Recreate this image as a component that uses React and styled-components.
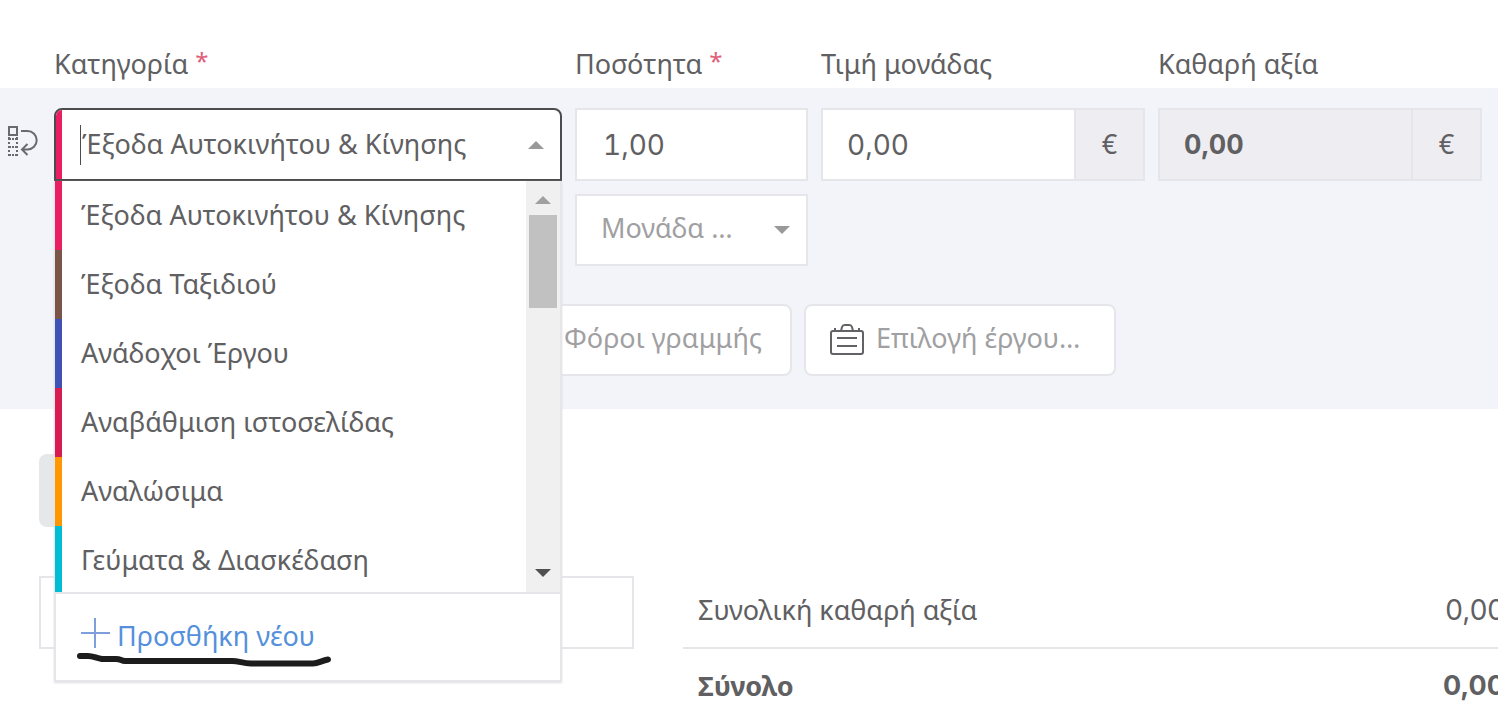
import React, { useState } from 'react';
import styled, { createGlobalStyle } from 'styled-components';

const GlobalStyle = createGlobalStyle`
    * {
        box-sizing: border-box;
    }
    body {
        margin: 0;
        background: #ffffff;
        color: #606062;
        font-family: "Noto Sans", "Open Sans", sans-serif;
        font-size: 27px;
        line-height: 40px;
    }
    input, button, select {
        font: inherit;
        color: inherit;
        margin: 0;
    }
`

const Page = styled.main`
    overflow: hidden;
`

const Columns = styled.div`
    display: grid;
    grid-template-columns: 41px 508fr 233fr 324fr 324fr;
    column-gap: 13px;
    row-gap: 13px;
    padding-right: 16px;
`

const Labels = styled(Columns)`
    padding-top: 44px;
    padding-bottom: 4px;
`

const Label = styled.label`
    grid-column: ${props => props.$col};
    white-space: nowrap;
`

const Star = styled.span`
    color: #e0607a;
    font-size: 24px;
    line-height: 24px;
    vertical-align: 4px;
`

const Line = styled(Columns)`
    background: #f3f4f9;
    padding-top: 20px;
    padding-bottom: 33px;
`

const MoveBtn = styled.button`
    display: flex;
    align-items: center;
    height: 66px;
    padding: 0 0 0 6px;
    border: 0;
    background: none;
`

const Category = styled.div`
    position: relative;
    height: 73px;
`

const Combo = styled.div`
    display: flex;
    align-items: center;
    height: 73px;
    padding-right: 16px;
    background: #ffffff;
    border: 2px solid #4c4c4e;
    border-radius: 8px 8px 0 0;
    overflow: hidden;
    &::before {
        content: "";
        width: 6px;
        height: 100%;
        background: #e91e63;
    }
`

const Caret = styled.span`
    width: 1px;
    height: 40px;
    margin-left: 18px;
    margin-right: 1px;
    background: #4c4c4e;
`

const ComboInput = styled.input`
    flex: 1;
    min-width: 0;
    height: 100%;
    padding: 0 0 2px;
    border: 0;
    outline: 0;
    background: none;
`

const Arrow = styled.span`
    border: 8px solid transparent;
    border-top: ${props => props.$up ? "0" : `8px solid ${props.$color}`};
    border-bottom: ${props => props.$up ? `8px solid ${props.$color}` : "0"};
`

const Menu = styled.div`
    position: absolute;
    z-index: 2;
    top: 73px;
    left: 0;
    right: 0;
    background: #ffffff;
    border: 2px solid #e6e6ea;
    border-top: 0;
    box-shadow: 0 1px 2px #dddddd;
`

const Scroller = styled.div`
    display: flex;
    height: 411px;
`

const Options = styled.ul`
    flex: 1;
    margin: 0 0 0 -1px;
    padding: 0;
    list-style: none;
    overflow: hidden;
`

const Option = styled.li`
    height: 69px;
    padding-left: 19px;
    border-left: 7px solid ${props => props.$color};
    line-height: 67px;
    white-space: nowrap;
    cursor: pointer;
`

const ScrollBar = styled.div`
    display: flex;
    flex-direction: column;
    align-items: center;
    width: 34px;
    padding: 15px 0;
    background: #f0f0f0;
`

const Thumb = styled.div`
    width: 28px;
    height: 93px;
    margin-top: 11px;
    margin-bottom: auto;
    background: #c1c1c1;
`

const MenuFooter = styled.div`
    position: relative;
    height: 88px;
    border-top: 2px solid #e6e6ea;
`

const AddBtn = styled.button`
    display: flex;
    align-items: center;
    gap: 7px;
    height: 84px;
    padding: 0 25px;
    border: 0;
    background: none;
    color: #5590dc;
    cursor: pointer;
`

const Marker = styled.svg`
    position: absolute;
    left: 20px;
    top: 58px;
`

const Input = styled.input`
    width: 100%;
    min-width: 0;
    height: 73px;
    padding: 0 26px;
    background: #ffffff;
    border: 2px solid #e6e6ea;
    border-radius: 0;
    font-family: Inter, sans-serif;
    font-size: 28px;
    font-variant-numeric: tabular-nums;
`

const Group = styled.div`
    display: flex;
    background: ${props => props.$disabled ? "#eeedf2" : "#ffffff"};
    ${Input} {
        background: none;
        padding: 0 24px;
        font-size: ${props => props.$disabled ? 27 : 28}px;
        font-weight: ${props => props.$disabled ? 700 : 400};
    }
`

const Addon = styled.span`
    flex: none;
    width: 69px;
    border: 2px solid #e6e6ea;
    border-left: 0;
    background: #eeedf2;
    line-height: 67px;
    text-align: center;
`

const UnitBox = styled.div`
    grid-column: 3;
    display: flex;
    align-items: center;
    height: 72px;
    padding: 0 16px 0 24px;
    background: #ffffff;
    border: 2px solid #e6e6ea;
    color: #a0a0a2;
`

const Select = styled.select`
    flex: 1;
    min-width: 0;
    height: 100%;
    padding: 0 0 4px;
    border: 0;
    background: none;
    appearance: none;
`

const Actions = styled.div`
    grid-column: 2 / -1;
    display: flex;
    gap: 12px;
    padding-top: 25px;
    padding-left: 436px;
`

const ActionBtn = styled.button`
    display: flex;
    align-items: center;
    justify-content: ${props => props.$align};
    gap: 12px;
    width: ${props => props.$width}px;
    height: 72px;
    padding: 0 28px 4px 24px;
    background: #ffffff;
    border: 2px solid #e6e6ea;
    border-radius: 8px;
    color: #a0a0a2;
    white-space: nowrap;
`

const Bottom = styled.section`
    display: grid;
    grid-template-columns: 595fr 822fr;
    gap: 49px;
    margin-right: -7px;
    padding: 45px 0 0 39px;
`

const GreyBtn = styled.button`
    display: block;
    width: 240px;
    height: 73px;
    margin-bottom: 49px;
    border: 0;
    border-radius: 8px;
    background: #e6e7e9;
`

const Totals = styled.dl`
    margin: 0;
    padding-top: 119px;
`

const Total = styled.div`
    display: flex;
    justify-content: space-between;
    padding: 17px 0 17px 15px;
    border-bottom: ${props => props.$bold ? "0" : "2px solid #e6e6ea"};
    font-weight: ${props => props.$bold ? 700 : 400};
    dd {
        margin: 0;
        font-family: Inter, sans-serif;
        font-size: ${props => props.$bold ? 27 : 28}px;
    }
`

const categories = [
    { name: "Έξοδα Αυτοκινήτου & Κίνησης", color: "#e91e63" },
    { name: "Έξοδα Ταξιδιού", color: "#795548" },
    { name: "Ανάδοχοι Έργου", color: "#3f51b5" },
    { name: "Αναβάθμιση ιστοσελίδας", color: "#d81b51" },
    { name: "Αναλώσιμα", color: "#ff9800" },
    { name: "Γεύματα & Διασκέδαση", color: "#00bcd4" },
];

function MoveIcon() {
    return (
        <svg width="32" height="32" viewBox="0 0 32 32" fill="none" stroke="#6a6a6e" strokeWidth="2" aria-hidden="true">
            <path d="M3 2h8v8H3z"/>
            <path d="M3 12v3M3 17v2M3 21v2M3 25v2M11 12v3M11 17v2M11 21v2M11 25v2"/>
            <path d="M2 14h3M6 14h2M9 14h3M2 22h3M6 22h2M9 22h3M2 30h3M6 30h2M9 30h3"/>
            <path d="M15 6h6.500a9.200 9.200 0 0 1 0 18.400H16M21.500 19l-5.500 5.400 5.500 5.600"/>
        </svg>
    )
}

function ProjectIcon() {
    return (
        <svg width="34" height="36" viewBox="0 0 34 36" fill="none" stroke="#626266" strokeWidth="2" aria-hidden="true">
            <rect x="1" y="11" width="32" height="23" rx="2"/>
            <path d="M11 11l1-4a3 3 0 0 1 3-2h4a3 3 0 0 1 3 2l1 4M5 10V8M29 10V8M7 18h20M7 26h20"/>
        </svg>
    )
}

function App() {
    const [category, setCategory] = useState(categories[0].name);
    const [quantity, setQuantity] = useState("1,00");
    const [price, setPrice] = useState("0,00");
    return (
        <>
            <GlobalStyle/>
            <Page>
                <Labels>
                    <Label $col={2} htmlFor="category">Κατηγορία <Star>*</Star></Label>
                    <Label $col={3} htmlFor="quantity">Ποσότητα <Star>*</Star></Label>
                    <Label $col={4} htmlFor="price">Τιμή μονάδας</Label>
                    <Label $col={5} htmlFor="net">Καθαρή αξία</Label>
                </Labels>
                <Line>
                    <MoveBtn type="button" aria-label="Μετακίνηση"><MoveIcon/></MoveBtn>
                    <Category>
                        <Combo>
                            <Caret/>
                            <ComboInput id="category" role="combobox" aria-expanded="true" aria-controls="categories" value={category} onChange={e => setCategory(e.target.value)}/>
                            <Arrow $up $color="#999999"/>
                        </Combo>
                        <Menu>
                            <Scroller>
                                <Options id="categories" role="listbox">
                                    {categories.map(item => (
                                        <Option key={item.name} role="option" aria-selected={item.name === category} $color={item.color} onClick={() => setCategory(item.name)}>{item.name}</Option>
                                    ))}
                                </Options>
                                <ScrollBar>
                                    <Arrow $up $color="#a0a0a0"/>
                                    <Thumb/>
                                    <Arrow $color="#505050"/>
                                </ScrollBar>
                            </Scroller>
                            <MenuFooter>
                                <AddBtn type="button">
                                    <svg width="29" height="36" viewBox="0 0 29 36" fill="none" stroke="#7f9fdc" strokeWidth="2" aria-hidden="true">
                                        <path d="M0 15h29M14 0v30"/>
                                    </svg>
                                    Προσθήκη νέου
                                </AddBtn>
                                <Marker width="260" height="20" viewBox="0 0 260 20" fill="none" stroke="#1c1c1c" strokeWidth="6" strokeLinecap="round" strokeLinejoin="round" aria-hidden="true">
                                    <path d="M4 4h8c5 0 8 2 14 3h14c5 0 5 2 9 2h107c7 0 10 2 19 2.500h62c5 0 9-3 15-4"/>
                                </Marker>
                            </MenuFooter>
                        </Menu>
                    </Category>
                    <Input id="quantity" value={quantity} onChange={e => setQuantity(e.target.value)}/>
                    <Group>
                        <Input id="price" value={price} onChange={e => setPrice(e.target.value)}/>
                        <Addon>€</Addon>
                    </Group>
                    <Group $disabled>
                        <Input id="net" value="0,00" readOnly/>
                        <Addon>€</Addon>
                    </Group>
                    <UnitBox>
                        <Select aria-label="Μονάδα">
                            <option>Μονάδα …</option>
                        </Select>
                        <Arrow $color="#999999"/>
                    </UnitBox>
                    <Actions>
                        <ActionBtn type="button" $width={302} $align="flex-end">Φόροι γραμμής</ActionBtn>
                        <ActionBtn type="button" $width={312} $align="flex-start"><ProjectIcon/>Επιλογή έργου…</ActionBtn>
                    </Actions>
                </Line>
                <Bottom>
                    <div>
                        <GreyBtn type="button" aria-label="Προσθήκη γραμμής"/>
                        <Input aria-label="Σημειώσεις"/>
                    </div>
                    <Totals>
                        <Total><dt>Συνολική καθαρή αξία</dt><dd>0,00</dd></Total>
                        <Total $bold><dt>Σύνολο</dt><dd>0,00</dd></Total>
                    </Totals>
                </Bottom>
            </Page>
        </>
    );
}

export default App;
